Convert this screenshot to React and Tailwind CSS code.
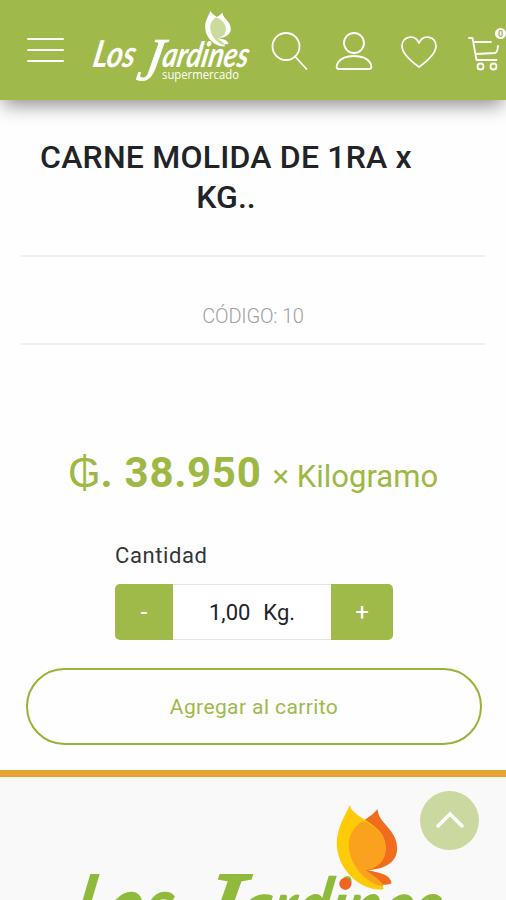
import React, { useState } from "react";

function Logo({ className, light }) {
  const text = light ? "#ffffff" : "#8fba3c";
  return (
    <svg
      className={className}
      viewBox="90 8 160 76"
      fill={text}
      fontFamily="Lato, sans-serif"
      fontStyle="italic"
      fontWeight="700"
    >
      <g transform="translate(0 66.5) skewX(-11)">
        <text x="91.500" y="0" fontSize="37" textLength="42" lengthAdjust="spacingAndGlyphs">
          Los
        </text>
        <text
          x="138"
          y="13.5"
          fontSize="61"
          fontWeight="400"
          fontFamily="Liberation Serif, serif"
          stroke={text}
          strokeWidth="0.8"
          textLength="24"
          lengthAdjust="spacingAndGlyphs"
        >
          J
        </text>
        <text x="161" y="0" fontSize="35" textLength="86" lengthAdjust="spacingAndGlyphs">
          ardines
        </text>
      </g>
      <text
        x="162"
        y="78.5"
        fontSize="12.5"
        fontStyle="normal"
        fontWeight="500"
        fontFamily="Open Sans, sans-serif"
        textLength="77"
        lengthAdjust="spacingAndGlyphs"
      >
        supermercado
      </text>
      {!light && <circle cx="208.800" cy="44" r="2.6" fill="#ee6420" />}
      <g transform="translate(106 39.5) scale(0.4237) translate(-103 -873)">
        <path
          fill={light ? "#ffffff" : "#f26c1d"}
          d="M378 809C378 823 398 829 397.500 849C397 863 384 869 368 870C382 873 390 874 392 883C384 886 378 884 372 881C350 866 345 840 352 832C357 822 368 820 378 809Z"
        />
        <path
          fill={light ? "#ffffff" : "#ffcb08"}
          d="M350 805C354 820 386 822 386 848C386 860 378 868 366 870C372 875 382 880 384 889C362 892 337 870 337 843C337 828 345 816 350 805Z"
        />
        <path
          fill={light ? "#cbdb9b" : "#faa21e"}
          d="M363 821C376 825 386 836 386 848C386 860 378 868 366 870C372 875 382 880 384 886C370 886 349 866 349 845C349 835 354 826 363 821Z"
        />
      </g>
    </svg>
  );
}

function Header() {
  return (
    <header className="flex h-[100px] shrink-0 items-center bg-[#a0b94b] text-white shadow-[0_8px_18px_-3px_rgba(0,0,0,0.45)]">
      <button className="ml-[27px] flex w-[37px] flex-col gap-[9px]">
        <span className="h-[2px] w-full rounded bg-white" />
        <span className="h-[2px] w-full rounded bg-white" />
        <span className="h-[2px] w-full rounded bg-white" />
      </button>
      <Logo light className="mb-2 ml-[26px] h-[76px] w-[160px] shrink-0 overflow-visible" />
      <svg
        className="ml-[20px] h-[44px] w-[236px] shrink-0"
        viewBox="270 28 236 44"
        fill="none"
        stroke="currentColor"
        strokeWidth="1.8"
        strokeLinecap="round"
        strokeLinejoin="round"
      >
        <circle cx="286" cy="46.5" r="13.5" />
        <path d="M295 56.500L306.500 69" />
        <circle cx="354" cy="43" r="10" />
        <path d="M339 69C335.500 69 336.500 65 338 62.500C341 58 347 56 354 56C361 56 367 58 370 62.500C371.500 65 372.500 69 369 69Z" />
        <path d="M419 67C412 62 402 54 402 46C402 36.500 414.500 33.500 419 43C423.500 33.500 436 36.500 436 46C436 54 426 62 419 67Z" />
        <path d="M469 38H472.500L476.500 60H496.500M474 42H491M475.500 54L495 53Q497.500 52.500 498 46" />
        <circle cx="480.500" cy="66.500" r="3" />
        <circle cx="493.500" cy="66.500" r="3" />
        <circle cx="500.500" cy="33.500" r="5.500" fill="#fff" stroke="none" />
        <text
          x="500.500"
          y="36.700"
          fontSize="9"
          fontWeight="700"
          fontFamily="Roboto, sans-serif"
          textAnchor="middle"
          fill="#a0b94b"
          stroke="none"
        >
          0
        </text>
      </svg>
    </header>
  );
}

export default function App() {
  const [quantity, setQuantity] = useState(1);

  return (
    <div className="flex h-[900px] w-[506px] flex-col overflow-hidden bg-[#fefefe] font-[Roboto,sans-serif]">
      <Header />
      <main className="flex h-[670px] shrink-0 flex-col">
        <h1 className="mt-[37px] w-[452px] text-center text-[32px] leading-[40px] font-medium text-[#222326]">
          <span className="tracking-[0.2px]">CARNE MOLIDA DE 1RA x</span>
          <br />
          KG..
        </h1>
        <div className="mx-[21px] mt-[38px] h-[90px] border-y-2 border-[#efefef] pt-[46px] text-center text-[20px] leading-[26px] font-light tracking-[-0.2px] text-[#a0a0a0]">
          CÓDIGO: 10
        </div>
        <div className="mt-[103px] flex h-[50px] items-baseline justify-center whitespace-pre text-[#9db843]">
          <span className="text-[42px] leading-[50px] font-normal">₲</span>
          <span className="text-[42px] leading-[50px] font-bold tracking-[0.7px]">. 38.950 </span>
          <span className="text-[31px] leading-[50px]">× Kilogramo</span>
        </div>
        <div className="mt-[44px] ml-[115px] w-[278px]">
          <p className="text-[22px] leading-[28px] tracking-[0.6px] text-[#333538]">Cantidad</p>
          <div className="mt-[14px] flex h-[56px] text-[22px]">
            <button
              className="w-[58px] rounded-l-[5px] bg-[#9fba48] font-medium text-white"
              onClick={() => setQuantity((q) => Math.max(1, q - 1))}
            >
              -
            </button>
            <div className="flex w-[158px] items-center justify-center gap-[13px] border-y border-[#e4e5e7] bg-white text-[#222326]">
              <span>{quantity.toFixed(2).replace(".", ",")}</span>
              <span>Kg.</span>
            </div>
            <button
              className="w-[62px] rounded-r-[5px] bg-[#9fba48] text-[24px] text-white"
              onClick={() => setQuantity((q) => q + 1)}
            >
              +
            </button>
          </div>
        </div>
        <button className="mt-[28px] ml-[26px] h-[77px] w-[456px] rounded-full border-2 border-[#95b336] pt-[2px] text-[21px] tracking-[0.4px] text-[#a0b94b]">
          Agregar al carrito
        </button>
      </main>
      <footer className="relative h-[130px] shrink-0 overflow-hidden border-t-[7px] border-[#e8a52f] bg-[#f9f9f9]">
        <Logo className="mt-[22px] ml-[65px] h-[179px] w-[378px]" />
        <button className="absolute top-[14px] right-[27px] flex size-[59px] items-center justify-center rounded-full bg-[#cbd89f]">
          <svg className="mb-[2px] h-[20px] w-[30px]" viewBox="0 0 30 20" fill="none" stroke="#fff" strokeWidth="3.5">
            <path d="M2 17L15 4L28 17" />
          </svg>
        </button>
      </footer>
    </div>
  );
}
